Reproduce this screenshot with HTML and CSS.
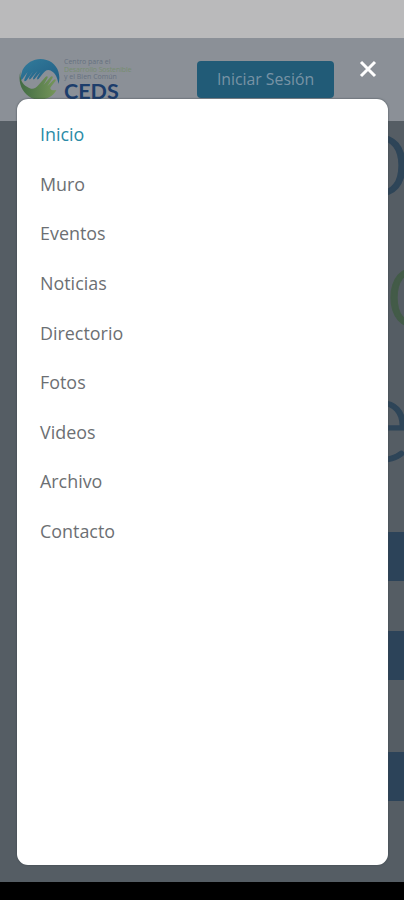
FILE: index.html
```
<!DOCTYPE html>
<html lang="es">
<head>
<meta charset="utf-8">
<title>CEDS</title>
<meta name="viewport" content="width=device-width, initial-scale=1">
<link rel="stylesheet" href="styles.css">
</head>
<body>
<div class="screen">
  <div class="status"></div>
  <header class="header">
    <div class="brand">
      <svg class="mark" viewBox="0 0 42 42">
        <defs>
          <linearGradient id="sky" x1="0" y1="0" x2="1" y2="1"><stop offset="0" stop-color="#327c9c"/><stop offset="1" stop-color="#215d83"/></linearGradient>
          <linearGradient id="leaf" x1="0" y1="0" x2="1" y2="0"><stop offset="0" stop-color="#416b43"/><stop offset="1" stop-color="#76965a"/></linearGradient>
        </defs>
        <path fill="url(#sky)" d="M4 12C9 3 19-1 28 2c10 3 15 13 12 24-1-7-4-13-10-14-3 0-4 2-6 4l-4 5c-1 1-2 0-1-2l3-5-6 7c-1 1-2 0-1-2l4-6-7 8c-1 1-2 0-1-2l4-6-6 8c-2 3-4 3-3 0l3-7-5 7c-2 2-3 1-2-2z"/>
        <path fill="url(#leaf)" d="M2 13c-3 11 1 22 11 27 9 4 20 1 25-8-5 1-8-1-5-4l4-5c1-2-1-2-2-1l-6 6 5-8c1-2-1-2-2-1l-7 8 4-7c1-2-1-2-2-1l-7 8c-3 4-7 5-11 2-6-3-8-9-7-16z"/>
      </svg>
      <div class="words">
        <span class="tag">Centro para el</span>
        <span class="tag green">Desarrollo Sostenible</span>
        <span class="tag">y el Bien Común</span>
        <strong class="name">CEDS</strong>
      </div>
    </div>
    <button class="login">Iniciar Sesión</button>
    <svg class="close" viewBox="0 0 18 18"><path d="M2 2l14 14M16 2L2 16"/></svg>
  </header>
  <main class="page">
    <span class="big top">o</span>
    <span class="big mid">o</span>
    <span class="big low">e</span>
    <div class="bars"><i></i><i></i><i></i></div>
    <nav class="menu">
      <a class="active">Inicio</a>
      <a>Muro</a>
      <a>Eventos</a>
      <a>Noticias</a>
      <a>Directorio</a>
      <a>Fotos</a>
      <a>Videos</a>
      <a>Archivo</a>
      <a>Contacto</a>
    </nav>
  </main>
  <footer class="bottom"></footer>
</div>
</body>
</html>
```
FILE: styles.css
```
* { box-sizing: border-box; }
body { margin: 0; font-family: "Open Sans", sans-serif; }
.screen { display: flex; flex-direction: column; width: 404px; height: 900px; overflow: hidden; background: #555d64; }
.status { height: 38px; background: #bababb; }
.header { display: flex; align-items: flex-start; height: 83px; padding: 0 27px 0 18px; background: #8b9097; }
.brand { display: flex; width: 179px; padding-top: 20px; }
.mark { width: 43px; height: 42px; }
.words { display: flex; flex-direction: column; margin-left: 3px; white-space: nowrap; }
.tag { height: 7.5px; font: 7px/7.5px "Open Sans", sans-serif; color: #667180; }
.green { color: #768d70; letter-spacing: -0.1px; }
.name { margin-top: -1px; font: bold 21.5px/22px Lato, sans-serif; color: #1c3d6b; }
.login { width: 137px; height: 37px; margin-top: 23px; padding: 0; border: 0; border-radius: 4px; background: #215b77; color: #7893a5; font: 15.8px/37px "Open Sans", sans-serif; }
.close { width: 18px; height: 18px; margin: 22px 0 0 auto; fill: none; stroke: #fff; stroke-width: 3; }
.page { position: relative; height: 761px; }
.menu { position: absolute; top: -22px; left: 17px; right: 16px; bottom: 17px; display: flex; flex-direction: column; padding: 11.4px 23px; border-radius: 11px; background: #fff; box-shadow: 0 0 2px #39434a; }
.menu a { height: 49.55px; font-size: 17.9px; line-height: 49.55px; color: #6c6f73; }
.menu .active { color: #2a8ba7; }
.big { position: absolute; font: 300 118px/120px Lato, sans-serif; color: #2e4558; -webkit-text-stroke: 1.5px #2e4558; }
.top { right: -7px; top: -31px; }
.mid { left: 385px; top: 101px; color: #435b48; -webkit-text-stroke-color: #435b48; }
.low { right: -7px; top: 235px; }
.bars { position: absolute; right: 0; top: 411px; width: 16px; }
.bars i { display: block; height: 49px; margin-bottom: 50px; background: #2c4359; }
.bars i:nth-child(2) { margin-bottom: 72px; }
.bottom { height: 18px; background: #000; }
```
